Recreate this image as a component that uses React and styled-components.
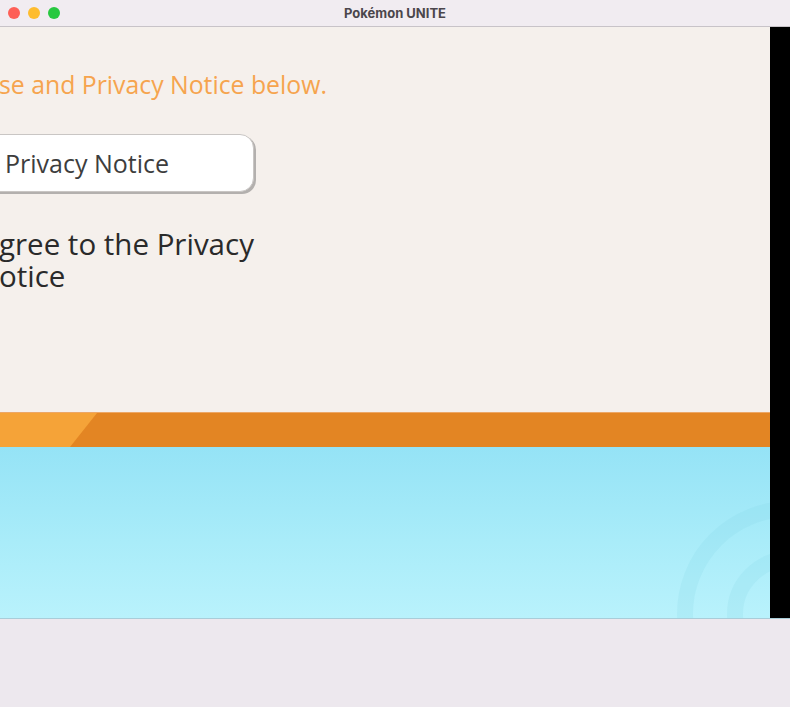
import styled, { createGlobalStyle } from 'styled-components';

const GlobalStyle = createGlobalStyle`
  html, body {
    margin: 0;
    padding: 0;
    background: #ede8ee;
  }
`;

const Window = styled.div`
  width: 790px;
  height: 707px;
  display: flex;
  flex-direction: column;
  background: #ede8ee;
  overflow: hidden;
`;

const TitleBar = styled.div`
  height: 26px;
  display: flex;
  align-items: center;
  position: relative;
  padding-left: 8px;
  gap: 8px;
  background: #f1ecf1;
  border-bottom: 1px solid #c8c3c8;
`;

const Light = styled.span`
  width: 12px;
  height: 12px;
  border-radius: 50%;
  background: ${p => p.color};
`;

const Title = styled.div`
  position: absolute;
  left: 0;
  right: 0;
  text-align: center;
  font-family: 'Inter', 'Liberation Sans', sans-serif;
  font-size: 13px;
  font-weight: 700;
  color: #4b464b;
  pointer-events: none;
`;

const Body = styled.div`
  display: flex;
  height: 591px;
  border-bottom: 1px solid #a9cdd9;
`;

const Game = styled.div`
  width: 770px;
  display: flex;
  flex-direction: column;
  position: relative;
  overflow: hidden;
`;

const Side = styled.div`
  flex: 1;
  background: #000;
`;

const Paper = styled.div`
  height: 385px;
  background: #f5f0ec;
  display: flex;
  flex-direction: column;
  padding-top: 43px;
  box-sizing: border-box;
  font-family: 'Open Sans', 'Noto Sans', sans-serif;
`;

const Lead = styled.div`
  margin-left: -1px;
  font-size: 24.8px;
  line-height: 29px;
  color: #f6a44e;
`;

const NoticeButton = styled.div`
  margin-top: 35px;
  margin-left: -20px;
  width: 274px;
  height: 58px;
  box-sizing: border-box;
  display: flex;
  align-items: center;
  padding-left: 24px;
  background: #fff;
  border: 1px solid #c9c6c4;
  border-radius: 14px;
  box-shadow: 2px 2px 0 #b3b0ae;
  font-size: 25px;
  color: #3d3d3d;
`;

const Agree = styled.div`
  margin-top: 36px;
  margin-left: -1px;
  font-size: 29.5px;
  line-height: 32px;
  color: #2a2a2a;
`;

const Stripe = styled.div`
  height: 35px;
  position: relative;
  background: #e38523;
  border-top: 1px solid #eda766;
  box-sizing: border-box;

  &::before {
    content: '';
    position: absolute;
    inset: 0;
    background: #f5a338;
    clip-path: polygon(0 0, 97px 0, 70px 100%, 0 100%);
  }
`;

const Sky = styled.div`
  flex: 1;
  background: linear-gradient(180deg, #95e3f6 0%, #a9ecf9 55%, #b9f2fc 100%);
`;

const Marks = styled.svg`
  position: absolute;
  left: 0;
  top: 447px;
  pointer-events: none;
`;

const Footer = styled.div`
  flex: 1;
  background: #ede8ee;
`;

export default function App() {
  return (
    <>
      <GlobalStyle />
      <Window>
        <TitleBar>
          <Light color="#fe5f57" />
          <Light color="#febc2e" />
          <Light color="#28c840" />
          <Title>Pokémon UNITE</Title>
        </TitleBar>
        <Body>
          <Game>
            <Paper>
              <Lead>se and Privacy Notice below.</Lead>
              <NoticeButton>Privacy Notice</NoticeButton>
              <Agree>
                gree to the Privacy
                <br />
                otice
              </Agree>
            </Paper>
            <Stripe />
            <Sky />
            <Marks width="770" height="171" viewBox="0 0 770 171">
              <g fill="none" stroke="#7fd0e6" strokeOpacity="0.18" strokeWidth="16">
                <circle cx="790" cy="140" r="105" />
                <circle cx="790" cy="140" r="55" />
                <circle cx="400" cy="240" r="85" />
              </g>
            </Marks>
          </Game>
          <Side />
        </Body>
        <Footer />
      </Window>
    </>
  );
}
